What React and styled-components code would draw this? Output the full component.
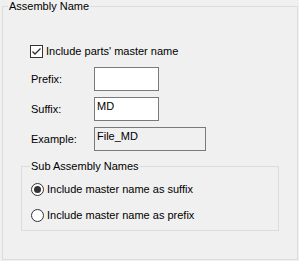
import React from "react";
import styled, { createGlobalStyle } from "styled-components";

const GlobalStyle = createGlobalStyle`
  html, body {
    margin: 0;
    padding: 0;
    background: #f0f0f0;
  }
  body {
    font-family: "Liberation Sans", Arial, sans-serif;
    font-size: 11px;
    color: #000;
  }
`;

const Page = styled.div`
  width: 299px;
  height: 261px;
  padding: 0 1px 0 2px;
  box-sizing: border-box;
`;

const Group = styled.fieldset`
  margin: ${(p) => p.$margin || "0"};
  padding: 0;
  border: 1px solid #dcdcdc;
  width: ${(p) => p.$width};
  height: ${(p) => p.$height};
  box-sizing: border-box;
  min-width: 0;
`;

const Legend = styled.legend`
  margin-left: ${(p) => p.$offset || "5px"};
  padding: 0 1px;
  font-size: 11px;
  line-height: 13px;
`;

const Content = styled.div`
  padding-left: ${(p) => p.$indent};
`;

const CheckRow = styled.label`
  display: flex;
  align-items: center;
  gap: 3px;
  height: 13px;
  margin: ${(p) => p.$margin || "0"};
  line-height: 13px;
`;

const Box = styled.span`
  width: 13px;
  height: 13px;
  box-sizing: border-box;
  border: 1px solid #333;
  background: #fff;
  display: flex;
  align-items: center;
  justify-content: center;
`;

const Radio = styled.span`
  width: 13px;
  height: 13px;
  box-sizing: border-box;
  border: 1px solid #333;
  border-radius: 50%;
  background: #fff;
  display: flex;
  align-items: center;
  justify-content: center;

  &::after {
    content: "";
    display: ${(p) => (p.$checked ? "block" : "none")};
    width: 7px;
    height: 7px;
    border-radius: 50%;
    background: #333;
  }
`;

const Form = styled.div`
  display: grid;
  grid-template-columns: 63px auto;
  row-gap: 6px;
  align-items: center;
  margin: 9px 0 0 1px;
  justify-items: start;
`;

const Label = styled.span`
  line-height: 13px;
`;

const Input = styled.div`
  width: ${(p) => p.$width || "65px"};
  height: 24px;
  box-sizing: border-box;
  border: 1px solid #7a7a7a;
  background: ${(p) => (p.$readOnly ? "#f0f0f0" : "#fff")};
  padding: 2px 2px;
  line-height: 13px;
  white-space: nowrap;
`;

function CheckMark() {
  return (
    <svg width="11" height="11" viewBox="0 0 11 11">
      <path d="M1.5 5.5 L4 8 L9.5 2.5" fill="none" stroke="#333" strokeWidth="1.4" />
    </svg>
  );
}

export default function App() {
  return (
    <>
      <GlobalStyle />
      <Page>
        <Group $width="296px" $height="260px">
          <Legend $offset="5px">Assembly Name</Legend>
          <Content $indent="27px">
            <CheckRow $margin="32px 0 0 0">
              <Box>
                <CheckMark />
              </Box>
              Include parts' master name
            </CheckRow>
            <Form>
              <Label>Prefix:</Label>
              <Input />
              <Label>Suffix:</Label>
              <Input>MD</Input>
              <Label>Example:</Label>
              <Input $width="112px" $readOnly>
                File_MD
              </Input>
            </Form>
          </Content>
          <Content $indent="18px">
            <Group $width="258px" $height="71px" $margin="9px 0 0 0">
              <Legend $offset="8px">Sub Assembly Names</Legend>
              <Content $indent="9px">
                <CheckRow $margin="10px 0 0 0">
                  <Radio $checked />
                  Include master name as suffix
                </CheckRow>
                <CheckRow $margin="13px 0 0 0">
                  <Radio />
                  Include master name as prefix
                </CheckRow>
              </Content>
            </Group>
          </Content>
        </Group>
      </Page>
    </>
  );
}
